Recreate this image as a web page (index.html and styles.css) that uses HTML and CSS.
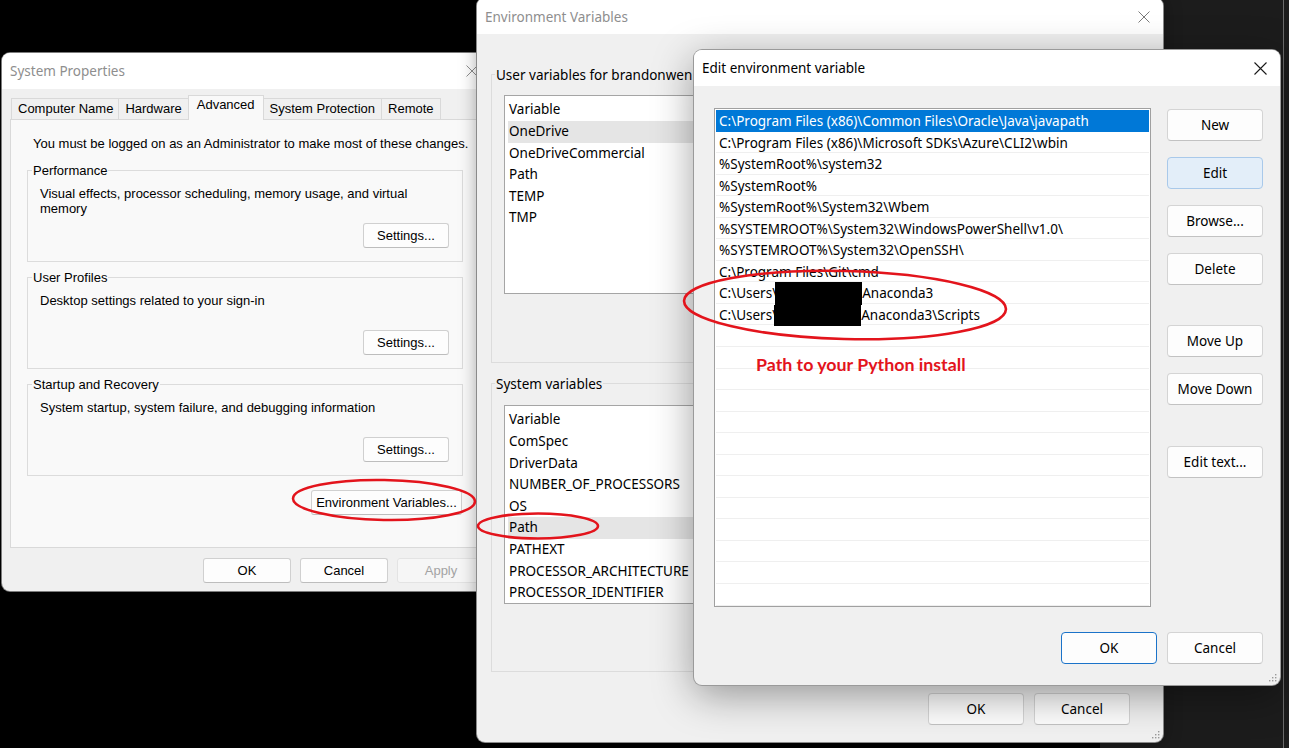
FILE: index.html
```html
<!DOCTYPE html>
<html lang="en">
<head>
<meta charset="utf-8">
<title>Environment Variables</title>
<link rel="stylesheet" href="styles.css">
</head>
<body>
<div class="desk-strip"></div>

<section class="win sysprops">
  <header class="titlebar inactive">
    <span class="title">System Properties</span>
    <span class="close sp-close"><svg width="12" height="12" viewBox="0 0 12 12"><path d="M0.5 0.5L11.5 11.5M11.5 0.5L0.5 11.5" stroke="currentColor" stroke-width="1"/></svg></span>
  </header>
  <nav class="tabs">
    <span class="tab">Computer Name</span>
    <span class="tab">Hardware</span>
    <span class="tab active">Advanced</span>
    <span class="tab">System Protection</span>
    <span class="tab">Remote</span>
  </nav>
  <div class="tabpanel">
    <p class="notice">You must be logged on as an Administrator to make most of these changes.</p>
    <div class="group">
      <span class="group-label">Performance</span>
      <p class="group-text">Visual effects, processor scheduling, memory usage, and virtual memory</p>
      <button class="sbtn settings">Settings...</button>
    </div>
    <div class="group">
      <span class="group-label">User Profiles</span>
      <p class="group-text">Desktop settings related to your sign-in</p>
      <button class="sbtn settings">Settings...</button>
    </div>
    <div class="group">
      <span class="group-label">Startup and Recovery</span>
      <p class="group-text">System startup, system failure, and debugging information</p>
      <button class="sbtn settings">Settings...</button>
    </div>
    <div class="env-row">
      <button class="sbtn env-btn">Environment Variables...</button>
    </div>
  </div>
  <footer class="sp-footer">
    <button class="sbtn foot">OK</button>
    <button class="sbtn foot">Cancel</button>
    <button class="sbtn foot" disabled>Apply</button>
  </footer>
</section>

<section class="win envwin">
  <header class="titlebar inactive">
    <span class="title">Environment Variables</span>
    <span class="close env-close"><svg width="12" height="12" viewBox="0 0 12 12"><path d="M0.5 0.5L11.5 11.5M11.5 0.5L0.5 11.5" stroke="currentColor" stroke-width="1"/></svg></span>
  </header>
  <div class="env-body">
    <div class="egroup">
      <span class="egroup-label">User variables for brandonwen</span>
      <div class="vlist">
        <div class="vhead">Variable</div>
        <div class="vrow sel">OneDrive</div>
        <div class="vrow">OneDriveCommercial</div>
        <div class="vrow">Path</div>
        <div class="vrow">TEMP</div>
        <div class="vrow">TMP</div>
      </div>
    </div>
    <div class="egroup second">
      <span class="egroup-label">System variables</span>
      <div class="vlist">
        <div class="vhead">Variable</div>
        <div class="vrow">ComSpec</div>
        <div class="vrow">DriverData</div>
        <div class="vrow">NUMBER_OF_PROCESSORS</div>
        <div class="vrow">OS</div>
        <div class="vrow sel">Path</div>
        <div class="vrow">PATHEXT</div>
        <div class="vrow">PROCESSOR_ARCHITECTURE</div>
        <div class="vrow">PROCESSOR_IDENTIFIER</div>
      </div>
    </div>
    <div class="env-footer">
      <button class="wbtn">OK</button>
      <button class="wbtn">Cancel</button>
    </div>
  </div>
  <svg class="grip" width="10" height="10" viewBox="0 0 10 10"><g fill="#9a9a9a"><rect x="8" y="2" width="1.4" height="1.4"/><rect x="5" y="5" width="1.4" height="1.4"/><rect x="8" y="5" width="1.4" height="1.4"/><rect x="2" y="8" width="1.4" height="1.4"/><rect x="5" y="8" width="1.4" height="1.4"/><rect x="8" y="8" width="1.4" height="1.4"/></g></svg>
</section>

<section class="win editwin">
  <header class="titlebar">
    <span class="title">Edit environment variable</span>
    <span class="close edit-close"><svg width="13" height="13" viewBox="0 0 13 13"><path d="M0.5 0.5L12.5 12.5M12.5 0.5L0.5 12.5" stroke="currentColor" stroke-width="1.1"/></svg></span>
  </header>
  <div class="edit-body">
    <div class="plist">
      <div class="prow sel">C:\Program Files (x86)\Common Files\Oracle\Java\javapath</div>
      <div class="prow">C:\Program Files (x86)\Microsoft SDKs\Azure\CLI2\wbin</div>
      <div class="prow">%SystemRoot%\system32</div>
      <div class="prow">%SystemRoot%</div>
      <div class="prow">%SystemRoot%\System32\Wbem</div>
      <div class="prow">%SYSTEMROOT%\System32\WindowsPowerShell\v1.0\</div>
      <div class="prow">%SYSTEMROOT%\System32\OpenSSH\</div>
      <div class="prow">C:\Program Files\Git\cmd</div>
      <div class="prow">C:\Users\<span class="redact"></span>Anaconda3</div>
      <div class="prow">C:\Users\<span class="redact r2"></span>Anaconda3\Scripts</div>
      <div class="prow"></div>
      <div class="prow"></div>
      <div class="prow"></div>
      <div class="prow"></div>
      <div class="prow"></div>
      <div class="prow"></div>
      <div class="prow"></div>
      <div class="prow"></div>
      <div class="prow"></div>
      <div class="prow"></div>
      <div class="prow"></div>
      <div class="prow"></div>
      <div class="prow"></div>
    </div>
    <div class="btn-col">
      <button class="wbtn">New</button>
      <button class="wbtn hot">Edit</button>
      <button class="wbtn">Browse...</button>
      <button class="wbtn">Delete</button>
      <button class="wbtn sep">Move Up</button>
      <button class="wbtn">Move Down</button>
      <button class="wbtn sep2">Edit text...</button>
    </div>
    <div class="edit-footer">
      <button class="wbtn default">OK</button>
      <button class="wbtn">Cancel</button>
    </div>
  </div>
  <svg class="grip" width="10" height="10" viewBox="0 0 10 10"><g fill="#9a9a9a"><rect x="8" y="2" width="1.4" height="1.4"/><rect x="5" y="5" width="1.4" height="1.4"/><rect x="8" y="5" width="1.4" height="1.4"/><rect x="2" y="8" width="1.4" height="1.4"/><rect x="5" y="8" width="1.4" height="1.4"/><rect x="8" y="8" width="1.4" height="1.4"/></g></svg>
</section>

<p class="note">Path to your Python install</p>

<svg class="marks" width="1289" height="748" viewBox="0 0 1289 748">
  <g fill="none" stroke="#e3141c" stroke-width="2.6">
    <ellipse cx="384" cy="500" rx="91" ry="20" transform="rotate(1 384 500)"/>
    <ellipse cx="538" cy="526" rx="60" ry="12.5"/>
    <ellipse cx="845" cy="305" rx="161" ry="34" transform="rotate(1.5 845 305)"/>
  </g>
</svg>
</body>
</html>
```

FILE: styles.css
```css
* { box-sizing: border-box; }
html, body { margin: 0; padding: 0; }
body {
  width: 1289px;
  height: 748px;
  overflow: hidden;
  position: relative;
  background: #000;
  font-family: "Noto Sans", "Liberation Sans", sans-serif;
  color: #000;
}
button { font-family: inherit; color: inherit; cursor: default; }
p { margin: 0; }

.desk-strip {
  position: absolute;
  left: 1100px;
  top: 0;
  width: 189px;
  height: 748px;
  background: #1c1c1c;
  border-right: 5px solid #1c1c1c;
}
.desk-strip::after {
  content: "";
  position: absolute;
  right: 0;
  top: 0;
  width: 1px;
  height: 748px;
  background: #6a6a6a;
}

/* ---------- windows ---------- */
.win {
  position: absolute;
  display: flex;
  flex-direction: column;
  background: #f0f0f0;
  border-radius: 8px;
  overflow: hidden;
}
.titlebar {
  flex: none;
  height: 36px;
  display: flex;
  align-items: center;
  justify-content: space-between;
  padding-left: 8px;
  background: #fff;
  font-size: 13.5px;
  color: #000;
}
.titlebar.inactive { color: #8e8e8e; }
.close {
  height: 100%;
  display: flex;
  align-items: center;
  justify-content: center;
}
.sp-close { width: 46px; color: #8e8e8e; }
.env-close { width: 38px; color: #7a7a7a; }
.edit-close { width: 40px; color: #1a1a1a; }
.grip { position: absolute; right: 3px; bottom: 3px; }

/* ---------- System Properties ---------- */
.sysprops {
  left: 2px;
  top: 53px;
  width: 493px;
  height: 538px;
  z-index: 1;
  box-shadow: 0 0 0 1px #7c7c7c;
  font-family: "Liberation Sans", Arial, sans-serif;
  font-size: 13px;
}
.sysprops .titlebar { font-family: "Noto Sans", sans-serif; }
.tabs {
  flex: none;
  height: 30px;
  display: flex;
  align-items: flex-end;
  padding-left: 9px;
}
.tab {
  height: 21px;
  line-height: 20px;
  padding: 0 6px;
  border: 1px solid #d9d9d9;
  border-bottom: none;
  margin-right: -1px;
  background: #f0f0f0;
  white-space: nowrap;
}
.tab:first-child { padding: 0 5px 0 6px; }
.tab.active {
  height: 25px;
  line-height: 18px;
  padding: 0 8px;
  margin-bottom: -1px;
  background: #f9f9f9;
  position: relative;
  z-index: 1;
}
.tabpanel {
  flex: none;
  height: 429px;
  margin: 0 10px 0 8px;
  padding: 16px 0 0 16px;
  background: #f9f9f9;
  border: 1px solid #d9d9d9;
}
.notice {
  margin-left: 6px;
  line-height: 16px;
  white-space: nowrap;
}
.group {
  width: 436px;
  height: 92px;
  margin-top: 15px;
  padding: 0 13px 13px 12px;
  border: 1px solid #dcdcdc;
  display: flex;
  flex-direction: column;
}
.notice + .group { margin-top: 18px; }
.group-label {
  align-self: flex-start;
  margin: -8px 0 0 -8px;
  padding: 0 1px;
  line-height: 16px;
  background: #f9f9f9;
}
.group-text {
  margin-top: 7px;
  line-height: 15px;
  width: 400px;
}
.sbtn {
  height: 25px;
  padding: 0;
  font-size: 13px;
  font-family: "Liberation Sans", Arial, sans-serif;
  background: #fdfdfd;
  border: 1px solid #d0d0d0;
  border-bottom-color: #bdbdbd;
  border-radius: 3px;
}
.settings {
  margin-top: auto;
  align-self: flex-end;
  width: 86px;
}
.env-row {
  width: 436px;
  margin-top: 14px;
  display: flex;
  justify-content: flex-end;
}
.env-btn { width: 151px; margin-right: 1px; }
.sp-footer {
  display: flex;
  justify-content: flex-end;
  gap: 9px;
  padding: 10px 10px 0 0;
}
.foot { width: 88px; }
.foot:disabled {
  color: #a3a3a3;
  background: #f6f6f6;
  border-color: #e3e3e3;
}

/* ---------- Environment Variables ---------- */
.envwin {
  left: 477px;
  top: -2px;
  width: 686px;
  height: 744px;
  z-index: 2;
  box-shadow: 0 0 0 1px #8a8a8a, 0 0 18px rgba(0, 0, 0, 0.35);
  font-size: 13.5px;
}
.envwin .titlebar { padding-top: 2px; }
.env-body {
  flex: 1;
  display: flex;
  flex-direction: column;
  padding: 40px 14px 0 14px;
}
.egroup {
  height: 289px;
  padding: 0 13px 0 12px;
  border: 1px solid #dcdcdc;
  display: flex;
  flex-direction: column;
}
.egroup.second { margin-top: 20px; }
.egroup-label {
  align-self: flex-start;
  margin: -9px 0 0 -9px;
  padding: 0 1px;
  line-height: 18px;
  background: #f0f0f0;
  white-space: nowrap;
}
.vlist {
  margin-top: 11px;
  height: 199px;
  background: #fff;
  border: 1px solid #a5a5a5;
  padding: 2px 3px;
  overflow: hidden;
  white-space: nowrap;
}
.second .vlist { margin-top: 12px; }
.vhead { height: 23px; line-height: 23px; padding-left: 1px; }
.vrow { height: 21.6px; line-height: 21.6px; padding-left: 1px; }
.vrow.sel { background: #e5e5e5; }
.env-footer {
  display: flex;
  justify-content: flex-end;
  gap: 10px;
  margin-top: 21px;
  padding-right: 19px;
}
.wbtn {
  width: 96px;
  height: 32px;
  padding: 0;
  font-size: 13.5px;
  background: #fdfdfd;
  border: 1px solid #d4d4d4;
  border-bottom-color: #c2c2c2;
  border-radius: 4px;
}

/* ---------- Edit environment variable ---------- */
.editwin {
  left: 694px;
  top: 50px;
  width: 586px;
  height: 635px;
  z-index: 3;
  box-shadow: 0 0 0 1px #9a9a9a, 0 10px 40px rgba(0, 0, 0, 0.38);
  font-size: 13.5px;
}
.edit-body {
  flex: 1;
  display: grid;
  grid-template-columns: 437px 96px;
  grid-template-rows: 499px auto;
  column-gap: 16px;
  row-gap: 25px;
  padding: 22px 17px 0 20px;
}
.plist {
  background: #fff;
  border: 1px solid #a0a0a0;
  padding: 1px;
  overflow: hidden;
  white-space: nowrap;
}
.prow {
  height: 21.55px;
  line-height: 21px;
  padding: 1px 0 0 3px;
  border-bottom: 1px solid #efefef;
}
.prow.sel {
  background: #0078d7;
  border-bottom-color: #0078d7;
  color: #fff;
}
.redact {
  display: inline-block;
  width: 87px;
  height: 23px;
  margin: -1px 0 0 -2px;
  vertical-align: top;
  background: #000;
}
.redact.r2 { height: 21px; margin: 0 0 0 -3px; }
.btn-col {
  display: flex;
  flex-direction: column;
  gap: 16px;
  padding-top: 1px;
}
.btn-col .sep { margin-top: 24px; }
.btn-col .sep2 { margin-top: 25px; }
.wbtn.hot {
  background: #e3eef9;
  border-color: #a9c9ea;
}
.wbtn.default {
  border: 1px solid #1b73c9;
}
.edit-footer {
  grid-column: 1 / -1;
  display: flex;
  justify-content: flex-end;
  gap: 10px;
}

/* ---------- annotations ---------- */
.note {
  position: absolute;
  left: 756px;
  top: 353px;
  z-index: 5;
  color: #e3141c;
  font-family: Lato, "Open Sans", sans-serif;
  font-weight: 700;
  font-size: 17.8px;
  line-height: 22px;
  white-space: nowrap;
}
.marks {
  position: absolute;
  left: 0;
  top: 0;
  z-index: 6;
  pointer-events: none;
}
```
